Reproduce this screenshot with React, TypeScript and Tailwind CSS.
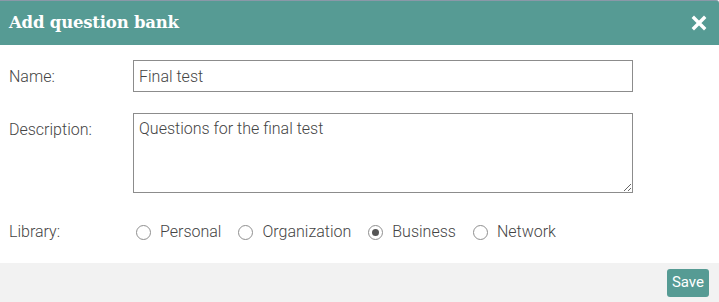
import { useState } from "react";

const LIBRARIES = ["Personal", "Organization", "Business", "Network"];

export default function App() {
  const [name, setName] = useState("Final test");
  const [description, setDescription] = useState("Questions for the final test");
  const [library, setLibrary] = useState("Business");

  return (
    <div className="w-[719px] h-[302px] flex flex-col bg-white font-['Roboto',sans-serif] font-light text-[16px] text-[#444]">
      {/* Header */}
      <div className="h-[45px] flex items-center justify-between pl-[9px] pr-[12px] bg-[#569b94] border-t border-[#8a98a8] rounded-tr-[3px]">
        <h2 className="text-white text-[16.5px] font-bold font-['DejaVu_Serif',serif] tracking-[-0.2px]">
          Add question bank
        </h2>
        <button className="text-white">
          <svg width="16" height="16" viewBox="0 0 16 16">
            <path d="M3 3 L13 13 M13 3 L3 13" stroke="currentColor" strokeWidth="3.4" strokeLinecap="square" />
          </svg>
        </button>
      </div>

      {/* Body */}
      <div className="flex-1 flex flex-col pl-[9px] pt-[15px]">
        <div className="flex items-center">
          <label className="w-[124px] pt-[1px]">Name:</label>
          <input
            value={name}
            onChange={e => setName(e.target.value)}
            className="w-[500px] h-[32px] border border-[#8c8c8c] px-[5px] outline-none text-[#444]"
          />
        </div>

        <div className="flex items-start mt-[21px]">
          <label className="w-[124px] pt-[5px]">Description:</label>
          <textarea
            value={description}
            onChange={e => setDescription(e.target.value)}
            className="w-[500px] h-[80px] border border-[#8c8c8c] px-[5px] pt-[4px] outline-none text-[#444] leading-[1.4]"
          />
        </div>

        <div className="flex items-center mt-[27px]">
          <label className="w-[127px]">Library:</label>
          <div className="flex items-center gap-[17px]">
            {LIBRARIES.map(lib => (
              <label key={lib} className="flex items-center gap-[9px] cursor-pointer">
                <span
                  onClick={() => setLibrary(lib)}
                  className="w-[15px] h-[15px] rounded-full border border-[#8f8f8f] flex items-center justify-center"
                >
                  {library === lib && <span className="w-[7px] h-[7px] rounded-full bg-[#555]" />}
                </span>
                <span>{lib}</span>
              </label>
            ))}
          </div>
        </div>
      </div>

      {/* Footer */}
      <div className="h-[39px] bg-[#f2f2f2] flex items-center justify-end pr-[10px]">
        <button className="h-[28px] px-[5px] rounded-[3px] bg-[#569b94] text-white text-[15px] font-normal">
          Save
        </button>
      </div>
    </div>
  );
}
